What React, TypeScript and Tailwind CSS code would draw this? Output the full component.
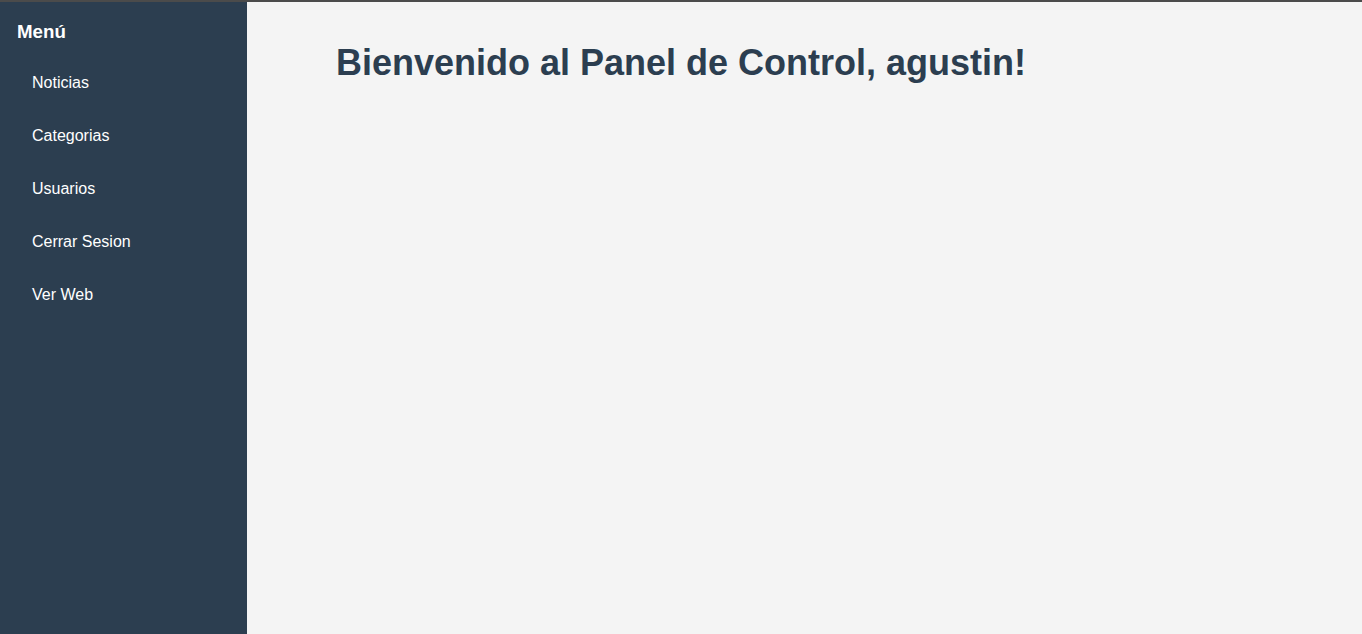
export default function App() {
  const items = ["Noticias", "Categorias", "Usuarios", "Cerrar Sesion", "Ver Web"];

  return (
    <div className="h-[634px] w-full flex flex-col bg-[#f4f4f4] font-['Liberation_Sans',Arial,sans-serif]">
      <div className="h-[2px] bg-[#4b4b4b]" />
      <div className="flex flex-1">
        {/* Sidebar */}
        <aside className="w-[247px] bg-[#2c3e50] text-white pt-[19px]">
          <h2 className="pl-[17px] text-[18.72px] leading-[22px] font-bold">Menú</h2>
          <ul className="mt-[13px]">
            {items.map((item) => (
              <li key={item} className="h-[53px] flex items-center pl-[32px] text-[16px] leading-[18px]">
                {item}
              </li>
            ))}
          </ul>
        </aside>

        {/* Content */}
        <main className="flex-1 pl-[89px] pt-[40px]">
          <h1 className="text-[36px] leading-[41px] font-bold text-[#2c3e50]">
            Bienvenido al Panel de Control, agustin!
          </h1>
        </main>
      </div>
    </div>
  );
}
